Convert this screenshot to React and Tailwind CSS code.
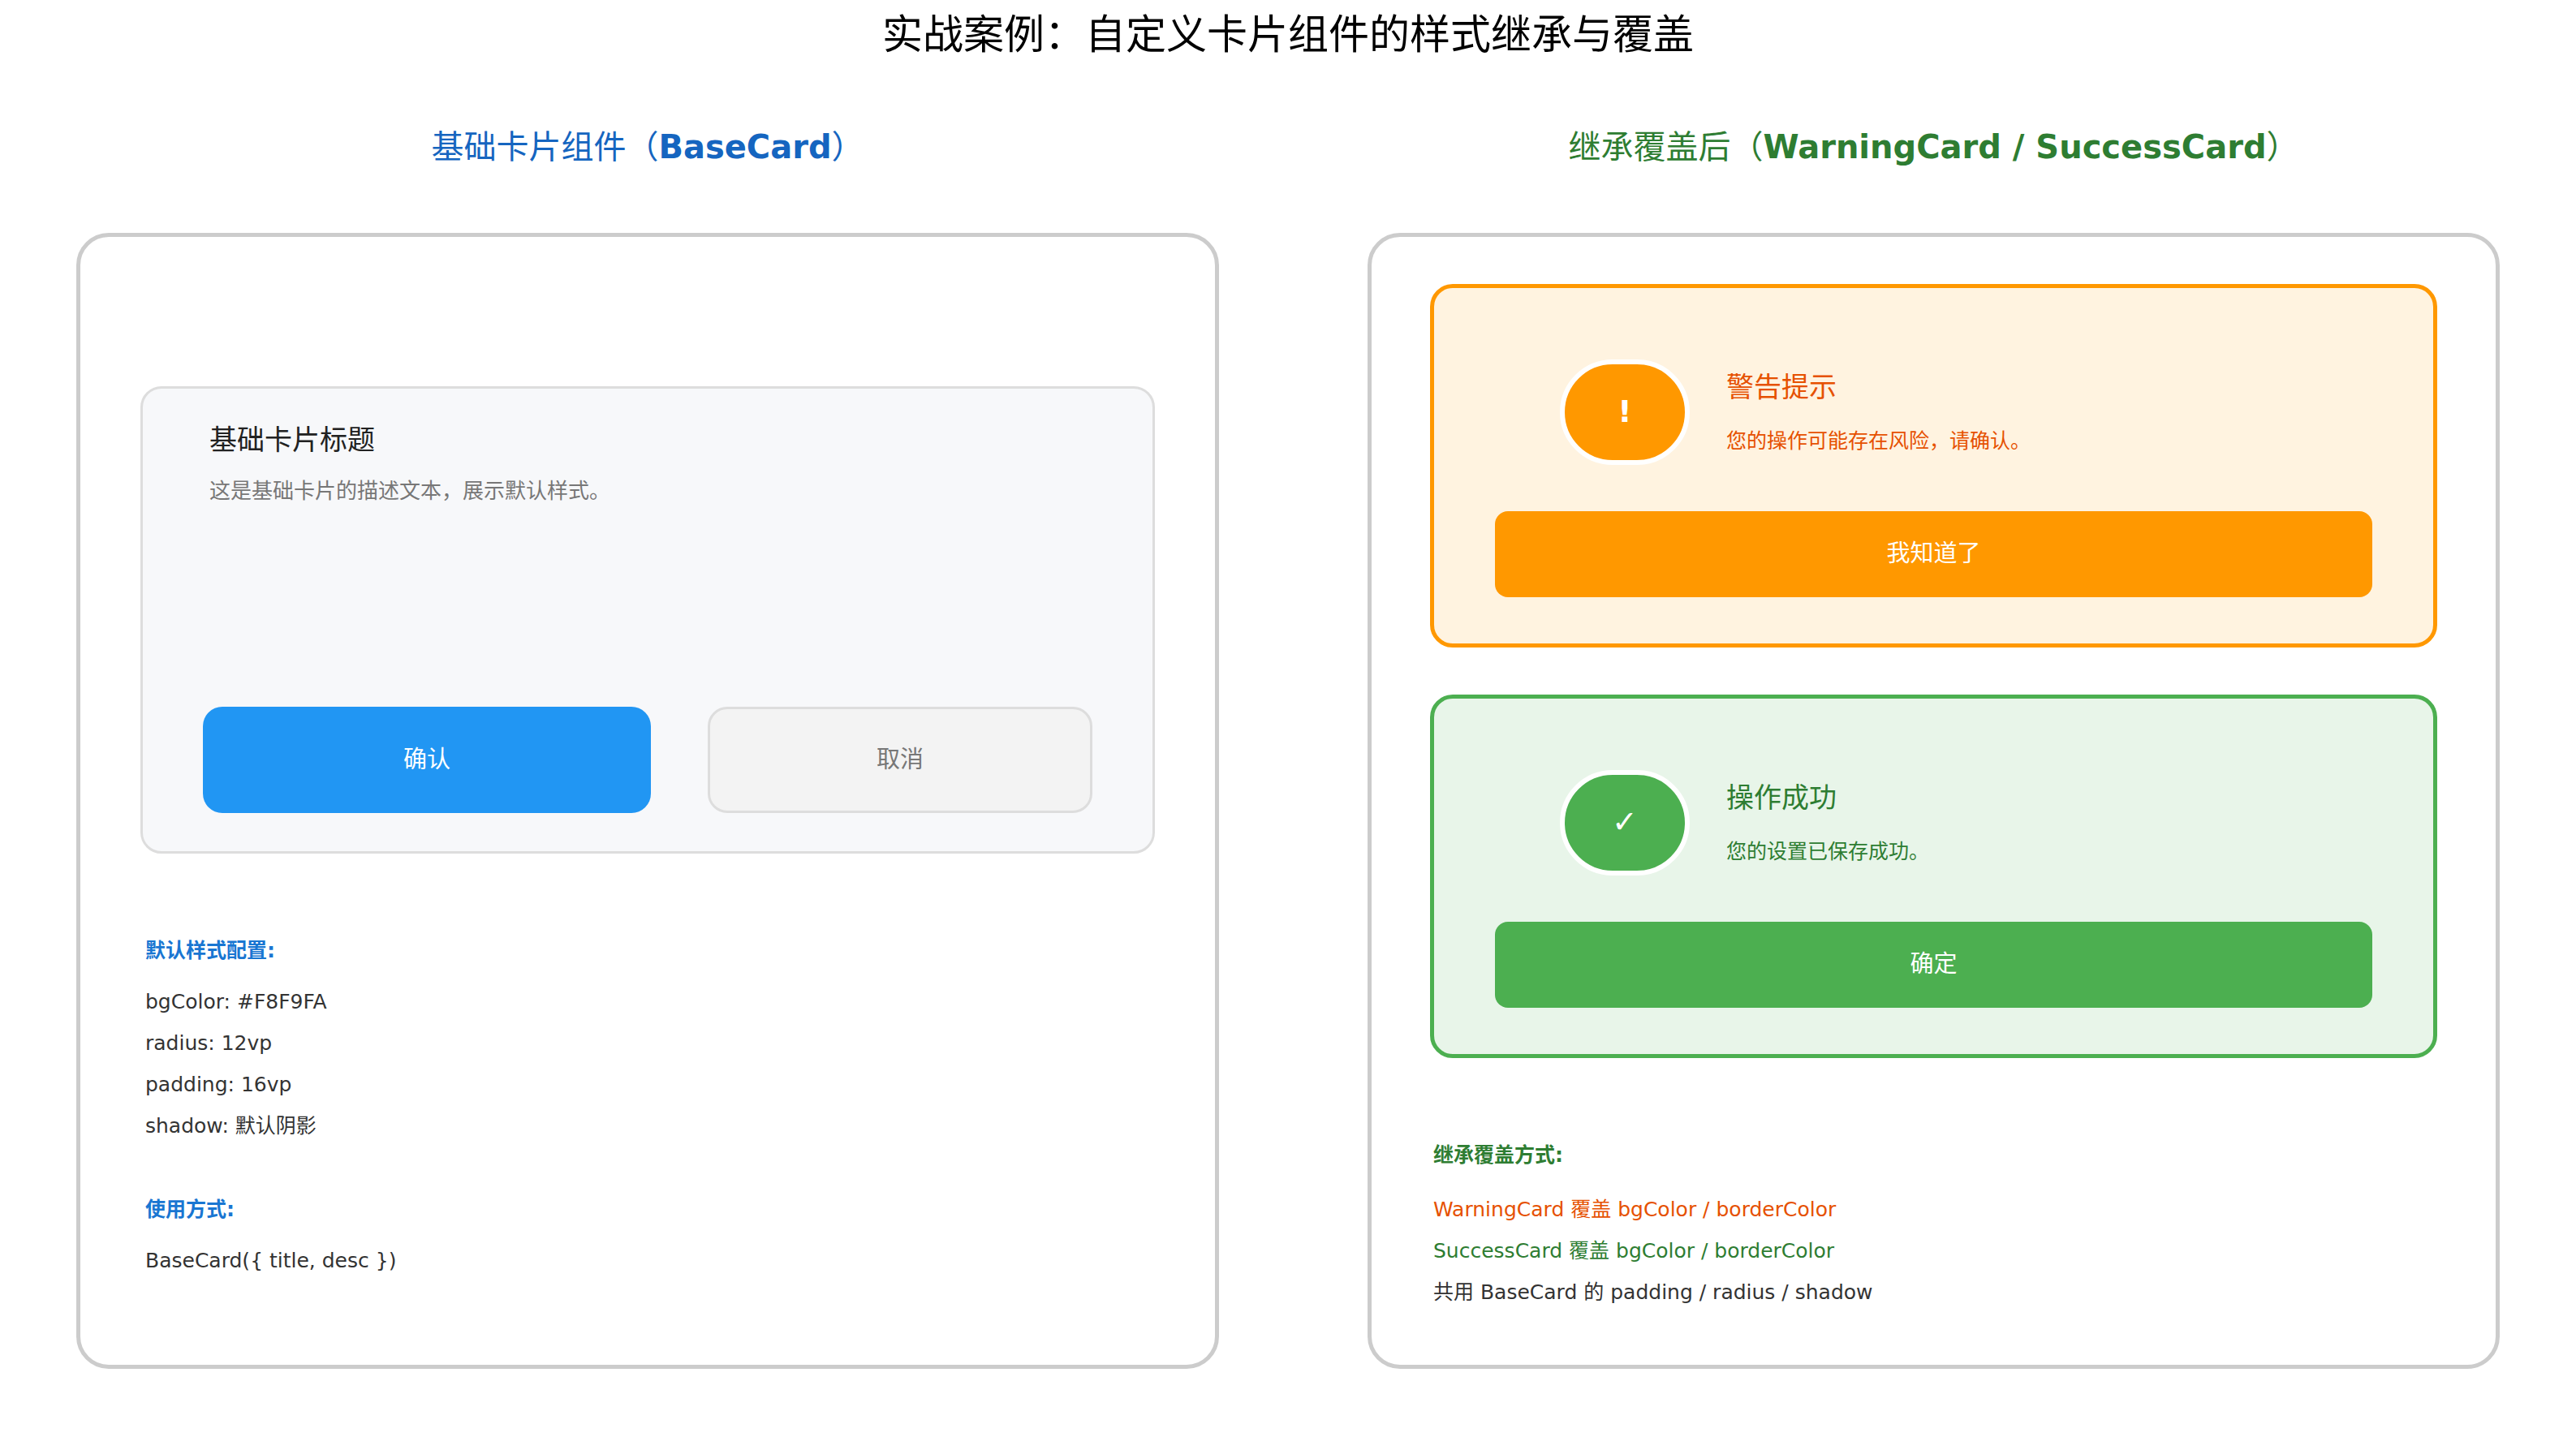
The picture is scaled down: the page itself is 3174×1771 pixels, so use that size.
import React from "react";

const font = { fontFamily: "'DejaVu Sans', 'Noto Sans CJK SC', sans-serif" };

function Line({ className = "", children }) {
  return <div className={`h-[51px] flex items-center text-[25px] ${className}`}>{children}</div>;
}

function AlertCard({ tone, icon, title, desc, btn }) {
  const warn = tone === "warn";
  return (
    <div className={`h-[448px] rounded-[28px] border-[5px] flex flex-col px-[75px] ${warn ? "border-[#FF9800] bg-[#FFF3E0]" : "border-[#4CAF50] bg-[#E8F5E9]"}`}>
      <div className="h-[275px] flex items-center pl-[80px] pt-[30px]">
        <div className={`w-[160px] h-[130px] rounded-full border-[6px] border-white flex items-center justify-center text-white text-[38px] font-bold w-[160px] ${warn ? "bg-[#FF9800]" : "bg-[#4CAF50]"}`} style={{ width: 160, height: 130 }}>
          {icon}
        </div>
        <div className="ml-[45px] flex flex-col">
          <div className={`text-[34px] ${warn ? "text-[#E65100]" : "text-[#2E7D32]"}`}>{title}</div>
          <div className={`text-[25px] mt-[22px] ${warn ? "text-[#E65100]" : "text-[#2E7D32]"}`}>{desc}</div>
        </div>
      </div>
      <div className={`h-[106px] rounded-[16px] flex items-center justify-center text-white text-[29px] ${warn ? "bg-[#FF9800]" : "bg-[#4CAF50]"}`}>{btn}</div>
    </div>
  );
}

export default function App() {
  return (
    <div className="w-[3174px] h-[1771px] bg-white relative" style={font}>
      <div className="h-[86px] flex items-center justify-center text-[50px] text-black">实战案例：自定义卡片组件的样式继承与覆盖</div>
      <div className="flex px-[94px] gap-[183px]">
        <div className="w-[1410px] flex flex-col">
          <div className="h-[213px] flex items-center justify-center text-[40px] text-[#1565C0] -mt-[12px]">
            基础卡片组件（<span className="font-bold">BaseCard</span>）
          </div>
          <div className="h-[1400px] rounded-[40px] border-[5px] border-[#cccccc] px-[74px] pt-[184px]">
            <div className="h-[576px] rounded-[26px] border-[3px] border-[#dddddd] bg-[#F7F8FA] flex flex-col px-[74px]">
              <div className="pl-[8px] pt-[38px] text-[34px] text-[#222]">基础卡片标题</div>
              <div className="pl-[8px] mt-[18px] text-[26px] text-[#777]">这是基础卡片的描述文本，展示默认样式。</div>
              <div className="flex mt-[246px] gap-[70px]">
                <div className="w-[552px] h-[131px] rounded-[24px] bg-[#2196F3] text-white text-[29px] flex items-center justify-center">确认</div>
                <div className="w-[474px] h-[131px] rounded-[24px] bg-[#F3F3F3] border-[3px] border-[#dddddd] text-[#777] text-[29px] flex items-center justify-center">取消</div>
              </div>
            </div>
            <div className="mt-[94px] pl-[6px] text-[#333]">
              <Line className="text-[#1976D2] font-bold">默认样式配置:</Line>
              <div className="mt-[12px]">
                <Line>bgColor: #F8F9FA</Line>
                <Line>radius: 12vp</Line>
                <Line>padding: 16vp</Line>
                <Line>shadow: 默认阴影</Line>
              </div>
              <Line className="mt-[52px] text-[#1976D2] font-bold">使用方式:</Line>
              <Line className="mt-[12px]">BaseCard({"{"} title, desc {"}"})</Line>
            </div>
          </div>
        </div>
        <div className="w-[1410px] flex flex-col">
          <div className="h-[213px] flex items-center justify-center text-[40px] text-[#2E7D32] -mt-[12px]">
            继承覆盖后（<span className="font-bold">WarningCard / SuccessCard</span>）
          </div>
          <div className="h-[1400px] rounded-[40px] border-[5px] border-[#cccccc] px-[72px] pt-[58px]">
            <AlertCard tone="warn" icon="!" title="警告提示" desc="您的操作可能存在风险，请确认。" btn="我知道了" />
            <div className="h-[58px]" />
            <AlertCard tone="ok" icon="✓" title="操作成功" desc="您的设置已保存成功。" btn="确定" />
            <div className="mt-[94px] pl-[4px] text-[#333]">
              <Line className="text-[#2E7D32] font-bold">继承覆盖方式:</Line>
              <div className="mt-[16px]">
                <Line className="text-[#E65100]">WarningCard 覆盖 bgColor / borderColor</Line>
                <Line className="text-[#2E7D32]">SuccessCard 覆盖 bgColor / borderColor</Line>
                <Line>共用 BaseCard 的 padding / radius / shadow</Line>
              </div>
            </div>
          </div>
        </div>
      </div>
    </div>
  );
}
